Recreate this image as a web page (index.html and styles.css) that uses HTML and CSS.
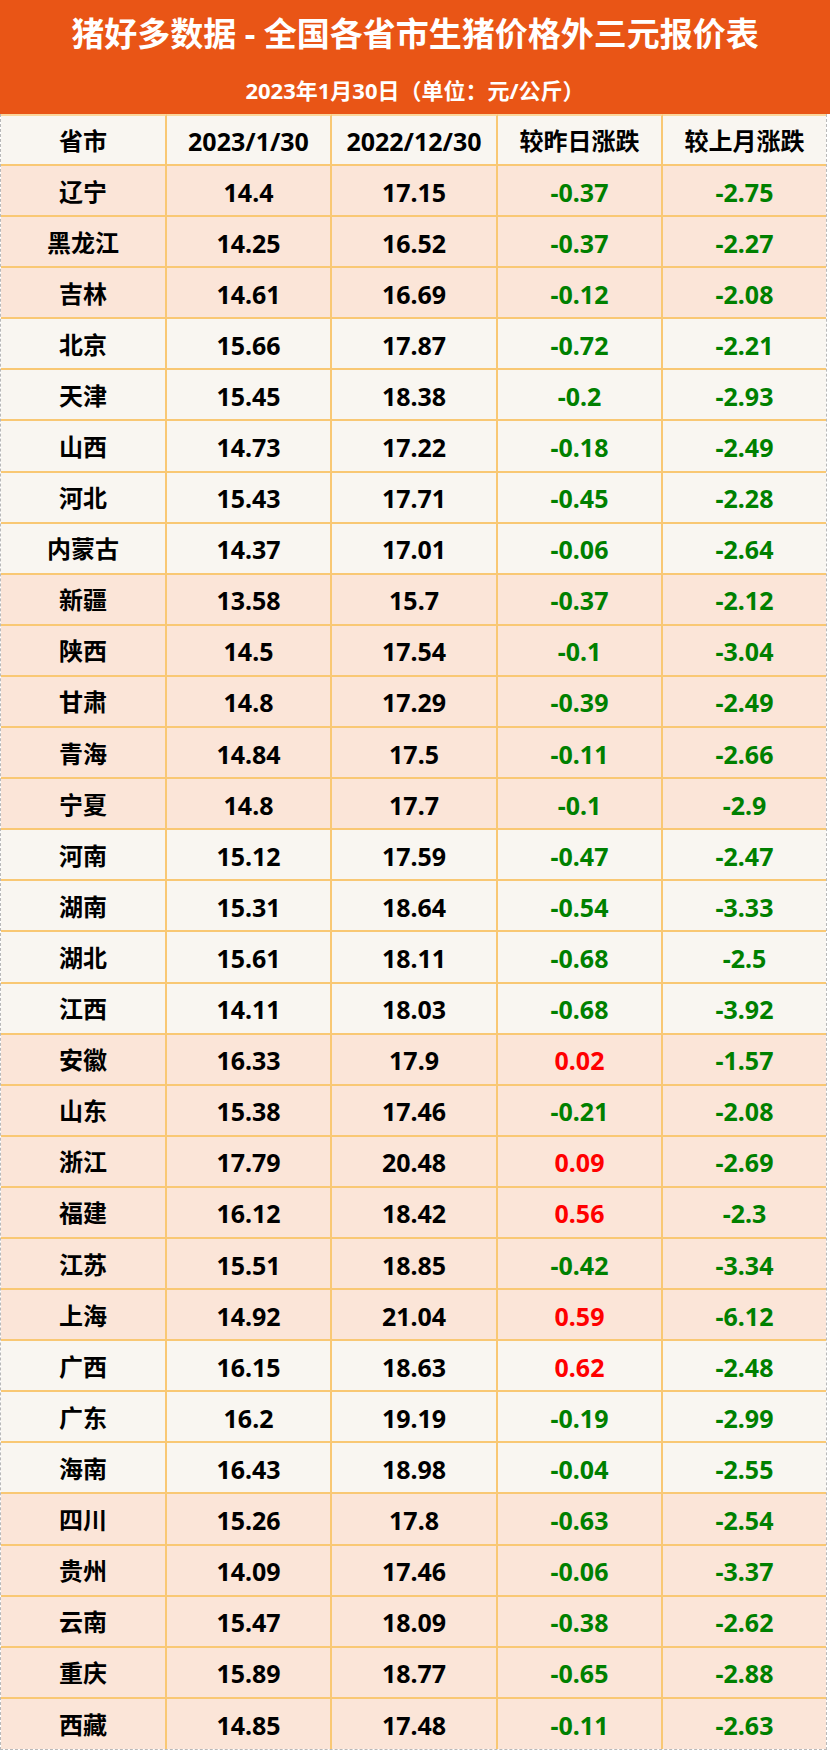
FILE: index.html
```html
<!DOCTYPE html>
<html lang="zh-CN">
<head>
<meta charset="utf-8">
<title>猪好多数据 - 全国各省市生猪价格外三元报价表</title>
<link rel="stylesheet" href="styles.css">
</head>
<body>
<div class="sheet">
  <header class="banner">
    <h1 class="banner-title">猪好多数据 - 全国各省市生猪价格外三元报价表</h1>
    <p class="banner-sub">2023年1月30日（单位：元/公斤）</p>
  </header>
  <table class="grid">
    <colgroup>
      <col class="c1"><col class="c2"><col class="c3"><col class="c4"><col class="c5">
    </colgroup>
    <thead>
      <tr><th>省市</th><th class="num">2023/1/30</th><th class="num">2022/12/30</th><th>较昨日涨跌</th><th>较上月涨跌</th></tr>
    </thead>
    <tbody class="peach">
      <tr><td>辽宁</td><td class="num">14.4</td><td class="num">17.15</td><td class="num down">-0.37</td><td class="num down">-2.75</td></tr>
      <tr><td>黑龙江</td><td class="num">14.25</td><td class="num">16.52</td><td class="num down">-0.37</td><td class="num down">-2.27</td></tr>
      <tr><td>吉林</td><td class="num">14.61</td><td class="num">16.69</td><td class="num down">-0.12</td><td class="num down">-2.08</td></tr>
    </tbody>
    <tbody class="pale">
      <tr><td>北京</td><td class="num">15.66</td><td class="num">17.87</td><td class="num down">-0.72</td><td class="num down">-2.21</td></tr>
      <tr><td>天津</td><td class="num">15.45</td><td class="num">18.38</td><td class="num down">-0.2</td><td class="num down">-2.93</td></tr>
      <tr><td>山西</td><td class="num">14.73</td><td class="num">17.22</td><td class="num down">-0.18</td><td class="num down">-2.49</td></tr>
      <tr><td>河北</td><td class="num">15.43</td><td class="num">17.71</td><td class="num down">-0.45</td><td class="num down">-2.28</td></tr>
      <tr><td>内蒙古</td><td class="num">14.37</td><td class="num">17.01</td><td class="num down">-0.06</td><td class="num down">-2.64</td></tr>
    </tbody>
    <tbody class="peach">
      <tr><td>新疆</td><td class="num">13.58</td><td class="num">15.7</td><td class="num down">-0.37</td><td class="num down">-2.12</td></tr>
      <tr><td>陕西</td><td class="num">14.5</td><td class="num">17.54</td><td class="num down">-0.1</td><td class="num down">-3.04</td></tr>
      <tr><td>甘肃</td><td class="num">14.8</td><td class="num">17.29</td><td class="num down">-0.39</td><td class="num down">-2.49</td></tr>
      <tr><td>青海</td><td class="num">14.84</td><td class="num">17.5</td><td class="num down">-0.11</td><td class="num down">-2.66</td></tr>
      <tr><td>宁夏</td><td class="num">14.8</td><td class="num">17.7</td><td class="num down">-0.1</td><td class="num down">-2.9</td></tr>
    </tbody>
    <tbody class="pale">
      <tr><td>河南</td><td class="num">15.12</td><td class="num">17.59</td><td class="num down">-0.47</td><td class="num down">-2.47</td></tr>
      <tr><td>湖南</td><td class="num">15.31</td><td class="num">18.64</td><td class="num down">-0.54</td><td class="num down">-3.33</td></tr>
      <tr><td>湖北</td><td class="num">15.61</td><td class="num">18.11</td><td class="num down">-0.68</td><td class="num down">-2.5</td></tr>
      <tr><td>江西</td><td class="num">14.11</td><td class="num">18.03</td><td class="num down">-0.68</td><td class="num down">-3.92</td></tr>
    </tbody>
    <tbody class="peach">
      <tr><td>安徽</td><td class="num">16.33</td><td class="num">17.9</td><td class="num up">0.02</td><td class="num down">-1.57</td></tr>
      <tr><td>山东</td><td class="num">15.38</td><td class="num">17.46</td><td class="num down">-0.21</td><td class="num down">-2.08</td></tr>
      <tr><td>浙江</td><td class="num">17.79</td><td class="num">20.48</td><td class="num up">0.09</td><td class="num down">-2.69</td></tr>
      <tr><td>福建</td><td class="num">16.12</td><td class="num">18.42</td><td class="num up">0.56</td><td class="num down">-2.3</td></tr>
      <tr><td>江苏</td><td class="num">15.51</td><td class="num">18.85</td><td class="num down">-0.42</td><td class="num down">-3.34</td></tr>
      <tr><td>上海</td><td class="num">14.92</td><td class="num">21.04</td><td class="num up">0.59</td><td class="num down">-6.12</td></tr>
    </tbody>
    <tbody class="pale">
      <tr><td>广西</td><td class="num">16.15</td><td class="num">18.63</td><td class="num up">0.62</td><td class="num down">-2.48</td></tr>
      <tr><td>广东</td><td class="num">16.2</td><td class="num">19.19</td><td class="num down">-0.19</td><td class="num down">-2.99</td></tr>
      <tr><td>海南</td><td class="num">16.43</td><td class="num">18.98</td><td class="num down">-0.04</td><td class="num down">-2.55</td></tr>
    </tbody>
    <tbody class="peach">
      <tr><td>四川</td><td class="num">15.26</td><td class="num">17.8</td><td class="num down">-0.63</td><td class="num down">-2.54</td></tr>
      <tr><td>贵州</td><td class="num">14.09</td><td class="num">17.46</td><td class="num down">-0.06</td><td class="num down">-3.37</td></tr>
      <tr><td>云南</td><td class="num">15.47</td><td class="num">18.09</td><td class="num down">-0.38</td><td class="num down">-2.62</td></tr>
      <tr><td>重庆</td><td class="num">15.89</td><td class="num">18.77</td><td class="num down">-0.65</td><td class="num down">-2.88</td></tr>
      <tr class="last"><td>西藏</td><td class="num">14.85</td><td class="num">17.48</td><td class="num down">-0.11</td><td class="num down">-2.63</td></tr>
    </tbody>
  </table>
</div>
</body>
</html>
```

FILE: styles.css
```css
html, body {
  margin: 0;
  padding: 0;
  background: #ffffff;
}

body {
  font-family: "Noto Sans", "Noto Sans CJK SC", sans-serif;
  color: #000;
}

.sheet {
  width: 830px;
}

.banner {
  background: #e95516;
  height: 114px;
  box-sizing: border-box;
  padding-top: 14px;
  color: #ffffff;
  text-align: center;
  font-weight: 700;
}

.banner-title {
  margin: 0;
  font-size: 33px;
  line-height: 40px;
  font-weight: 700;
}

.banner-sub {
  margin: 22px 0 0;
  font-size: 22px;
  line-height: 28px;
  font-weight: 700;
}

.grid {
  width: 827px;
  table-layout: fixed;
  border-collapse: separate;
  border-spacing: 0;
  border-left: 1px dashed #b9b9b9;
  border-right: 1px dashed #b9b9b9;
  border-bottom: 1px dashed #b9b9b9;
}

.c1 { width: 166px; }
.c2 { width: 165px; }
.c3 { width: 166px; }
.c4 { width: 165px; }
.c5 { width: 163px; }

.grid th,
.grid td {
  box-sizing: border-box;
  padding: 2px 0 0;
  text-align: center;
  vertical-align: middle;
  font-weight: 700;
  font-size: 24px;
  line-height: 30px;
  border-right: 2px solid #f9c874;
  border-bottom: 2px solid #f9c874;
  white-space: nowrap;
}

.grid th:last-child,
.grid td:last-child {
  border-right: none;
}

.grid thead th {
  background: #f9f6f1;
  height: 52px;
  border-top: 2px solid #fbd79c;
}

.grid td {
  height: 51.1px;
}

.grid .num {
  font-size: 25px;
}

.grid tr.last td {
  border-bottom: none;
  height: 50px;
}

.peach td { background: #fbe5d8; }
.pale td { background: #f9f6f1; }

.down { color: #008000; }
.up { color: #ff0000; }
```
